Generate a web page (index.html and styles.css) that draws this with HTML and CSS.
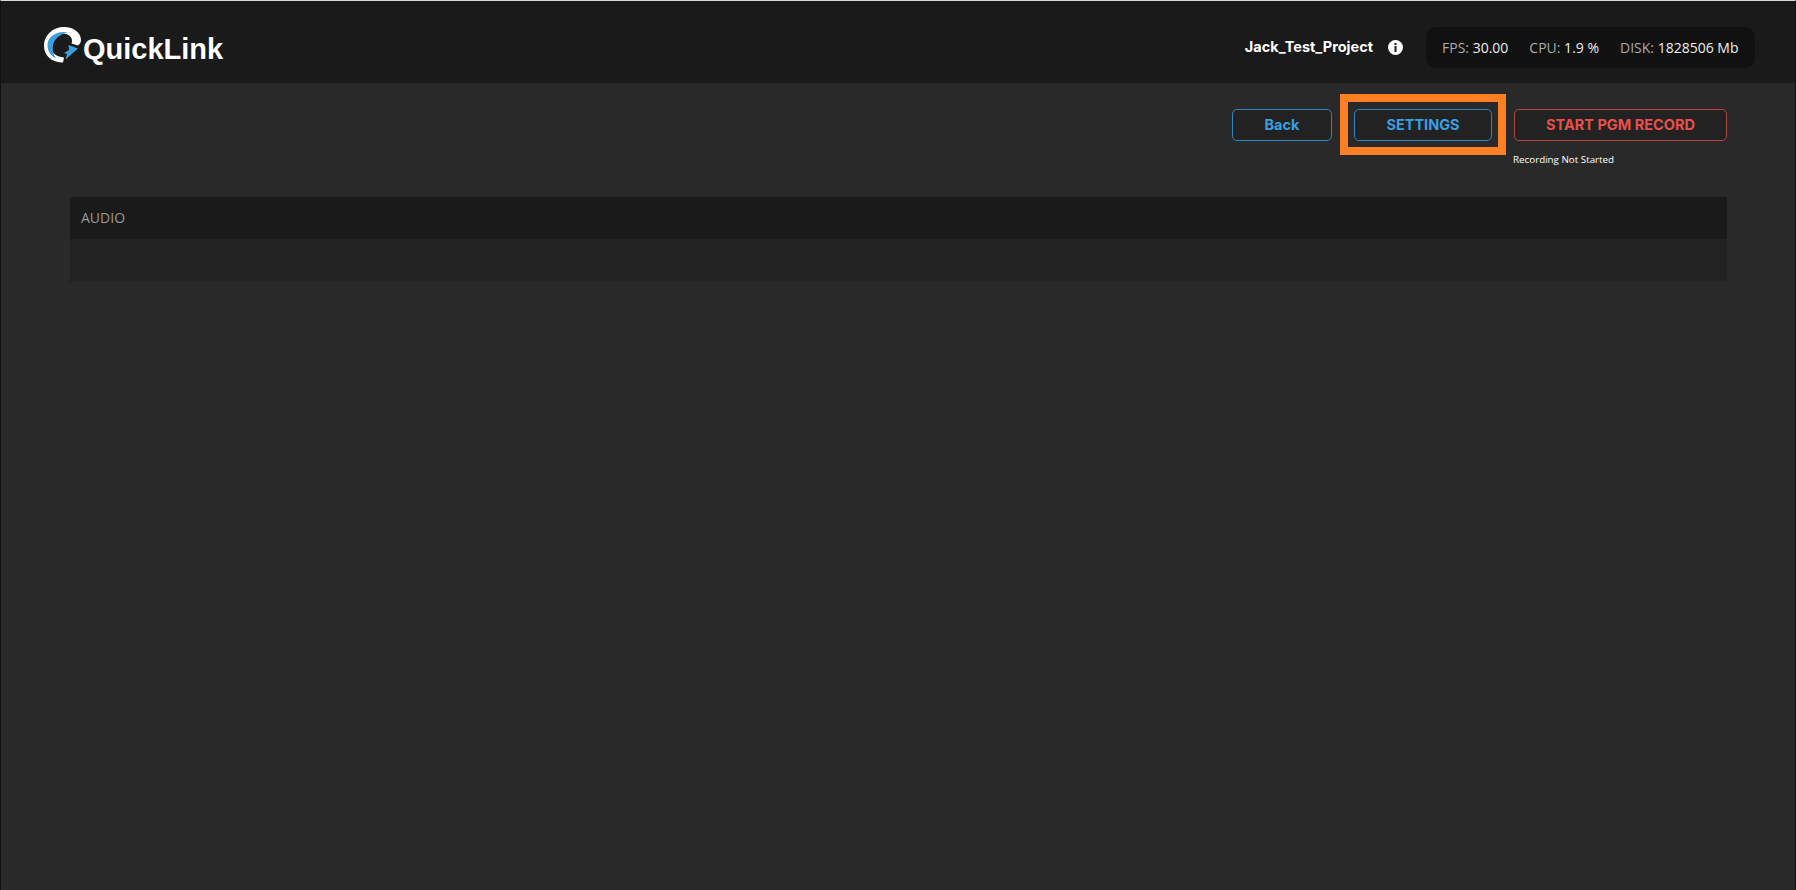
FILE: index.html
```html
<!DOCTYPE html>
<html lang="en">
<head>
<meta charset="utf-8">
<title>QuickLink</title>
<link rel="stylesheet" href="styles.css">
</head>
<body>
<div class="app">
  <header class="topbar">
    <div class="logo">
      <svg class="logo-mark" width="37" height="36" viewBox="0 0 37 36">
        <path d="M19 35.500C8 35.500 0 29 0 19C0 8 9 0 20 0C30 0 37 6 37 13C37 15 36 17 34 18.500L27.500 16.500C29.500 12 26 7 20 6.500C12 6 6.500 12 6.500 18C6.500 25 12 30 20 30.500Z" fill="#fff"/>
        <path d="M24 5.500C14 3 3.500 9 3.500 18C3.500 24 6.500 29 12 31.500C9 27 8 23 9 18C10.500 12 15 7.500 24 5.500Z" fill="#3a9fdc"/>
        <path d="M34 21.500L24.500 18L25 23L20 26L23 27L21.500 32.500Z" fill="#3a9fdc"/>
      </svg>
      <span class="logo-text">QuickLink</span>
    </div>
    <div class="status">
      <span class="project">Jack_Test_Project</span>
      <svg class="info" width="15" height="15" viewBox="0 0 15 15">
        <circle cx="7.5" cy="7.5" r="7.5" fill="#fff"/>
        <rect x="6.5" y="3" width="2" height="2" fill="#1a1a1a"/>
        <rect x="6.5" y="6" width="2" height="6" fill="#1a1a1a"/>
      </svg>
      <div class="stats">
        <span class="stat"><span class="stat-label">FPS:</span> 30.00</span>
        <span class="stat"><span class="stat-label">CPU:</span> 1.9 %</span>
        <span class="stat"><span class="stat-label">DISK:</span> 1828506 Mb</span>
      </div>
    </div>
  </header>
  <main class="content">
    <div class="actions">
      <button class="btn btn-blue btn-back">Back</button>
      <div class="highlight"><button class="btn btn-blue btn-settings">SETTINGS</button></div>
      <div class="record">
        <button class="btn btn-red btn-record">START PGM RECORD</button>
        <div class="record-note">Recording Not Started</div>
      </div>
    </div>
    <section class="panel">
      <div class="panel-head">AUDIO</div>
      <div class="panel-body"></div>
    </section>
  </main>
</div>
</body>
</html>
```
FILE: styles.css
```css
* { box-sizing: border-box; }
html, body { margin: 0; height: 100%; }
body { background: #292929; overflow: hidden; }
.app {
  height: 890px;
  display: flex;
  flex-direction: column;
  border-top: 1px solid #d8d8d8;
  border-left: 1px solid #111;
  border-right: 1px solid #111;
  background: #292929;
}
.topbar {
  height: 82px;
  flex: none;
  background: #1a1a1a;
  display: flex;
  align-items: center;
  justify-content: space-between;
  padding: 11px 40px 0 43px;
}
.logo { display: flex; align-items: center; gap: 2px; }
.logo-mark { display: block; margin-bottom: 5px; }
.logo-text {
  font: 700 29px/1 "Liberation Sans", Arial, sans-serif;
  color: #fff;
  margin-top: 4px;
}
.status { display: flex; align-items: center; }
.project {
  font: 700 14.5px/1 Inter, sans-serif;
  color: #fff;
}
.info { margin: 0 23px 0 15px; display: block; }
.stats {
  height: 41px;
  width: 329px;
  background: #111;
  border-radius: 10px;
  display: flex;
  align-items: center;
  gap: 21px;
  padding: 0 16px;
  font: 400 14px/1 "Open Sans", sans-serif;
  color: #eee;
  white-space: nowrap;
}
.stat-label { color: #aaa; }
.content { flex: 1; padding: 11px 68px 0 69px; }
.actions { display: flex; justify-content: flex-end; align-items: flex-start; height: 103px; }
.btn {
  height: 32px;
  background: #222;
  border-radius: 5px;
  border: 1px solid;
  font: 700 14.5px/1 Inter, sans-serif;
  padding: 0;
}
.btn-blue { color: #3a9fe0; border-color: #2f87bd; }
.btn-red { color: #e8504a; border-color: #b5453f; }
.btn-back { width: 100px; margin-top: 15px; }
.highlight {
  width: 166px;
  height: 61px;
  border: 8px solid #ff7f24;
  margin-left: 8px;
  padding: 7px 6px 0;
}
.btn-settings { width: 138px; }
.record { margin-left: 8px; padding-top: 15px; }
.btn-record { width: 213px; display: block; }
.record-note {
  font: 400 9.8px/1 "Open Sans", sans-serif;
  color: #fff;
  margin-top: 14px;
  margin-left: -1px;
}
.panel { background: #222; }
.panel-head {
  height: 42px;
  background: #1a1a1a;
  padding-left: 11px;
  display: flex;
  align-items: center;
  font: 400 14px/1 "Open Sans", sans-serif;
  color: #999;
}
.panel-body { height: 43px; }
```
